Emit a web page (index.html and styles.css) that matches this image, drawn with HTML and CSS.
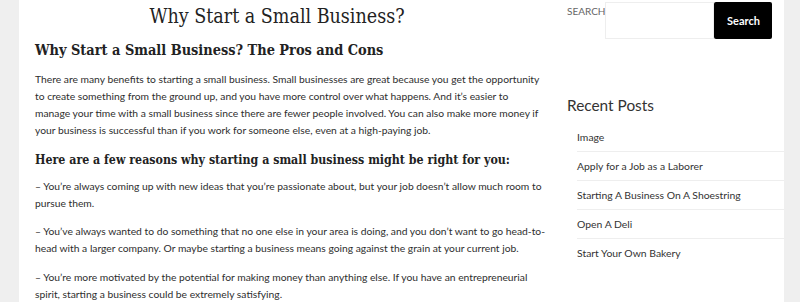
FILE: index.html
```html
<!DOCTYPE html>
<html lang="en">
<head>
    <meta charset="UTF-8">
    <meta name="viewport" content="width=device-width, initial-scale=1.0">
    <title>Why Start a Small Business?</title>
    <link rel="stylesheet" href="styles.css">
</head>
<body>

    <div class="page">
        <main class="content">
            <h1 class="entry-title">Why Start a Small Business?</h1>

            <h2>Why Start a Small Business? The Pros and Cons</h2>
            <p>There are many benefits to starting a small business. Small businesses are great because you get the opportunity to create something from the ground up, and you have more control over what happens. And it&#8217;s easier to manage your time with a small business since there are fewer people involved. You can also make more money if your business is successful than if you work for someone else, even at a high-paying job.</p>

            <h3>Here are a few reasons why starting a small business might be right for you:</h3>
            <p>&#8211; You&#8217;re always coming up with new ideas that you&#8217;re passionate about, but your job doesn&#8217;t allow much room to pursue them.</p>
            <p>&#8211; You&#8217;ve always wanted to do something that no one else in your area is doing, and you don&#8217;t want to go head-to-head with a larger company. Or maybe starting a business means going against the grain at your current job.</p>
            <p class="gap">&#8211; You&#8217;re more motivated by the potential for making money than anything else. If you have an entrepreneurial spirit, starting a business could be extremely satisfying.</p>
        </main>

        <aside class="sidebar">
            <form class="search-form">
                <label for="s">Search</label>
                <input type="search" id="s">
                <button type="button">Search</button>
            </form>

            <div class="widget">
                <h2 class="widget-title">Recent Posts</h2>
                <ul class="recent-posts">
                    <li><a href="#">Image</a></li>
                    <li><a href="#">Apply for a Job as a Laborer</a></li>
                    <li><a href="#">Starting A Business On A Shoestring</a></li>
                    <li><a href="#">Open A Deli</a></li>
                    <li><a href="#">Start Your Own Bakery</a></li>
                </ul>
            </div>
        </aside>
    </div>

</body>
</html>
```

FILE: styles.css
```css
body {
    margin: 0;
    background-color: #efefef;
    font-family: 'Lato', sans-serif;
    color: #333;
}

.page {
    display: flex;
    width: 765px;
    height: 302px;
    margin-left: 19px;
    background-color: #fff;
    overflow: hidden;
}

.content {
    width: 510px;
    padding-left: 16px;
    flex-shrink: 0;
}

.entry-title,
.content h2,
.content h3 {
    font-family: 'DejaVu Serif Condensed', 'DejaVu Serif', serif;
    color: #222;
}

.entry-title {
    margin: 3px 0 0;
    padding-right: 26px;
    text-align: center;
    font-weight: normal;
    font-size: 19.5px;
    line-height: 28px;
}

.content h2 {
    margin: 8px 0 10px;
    font-size: 14.4px;
    line-height: 22px;
    font-weight: bold;
}

.content h3 {
    margin: 11px 0 8px;
    font-size: 12.3px;
    line-height: 20px;
    font-weight: bold;
}

.content p {
    margin: 0 0 11px;
    font-size: 10.3px;
    line-height: 17px;
    color: #2e2e2e;
}

.content p.gap {
    margin-top: 12px;
}

.sidebar {
    margin-left: 22px;
    width: 217px;
}

.search-form {
    display: flex;
    margin-top: 2px;
}

.search-form label {
    font-size: 10px;
    text-transform: uppercase;
    color: #666;
    line-height: 14px;
    margin-top: 2px;
}

.search-form input {
    width: 109px;
    height: 37px;
    box-sizing: border-box;
    margin: 0;
    border: 1px solid #eee;
    border-radius: 0;
}

.search-form button {
    width: 58px;
    height: 37px;
    margin: 0;
    border: none;
    border-radius: 2px;
    background-color: #000;
    color: #fff;
    font-family: 'Lato', sans-serif;
    font-weight: bold;
    font-size: 11px;
}

.widget {
    margin-top: 56px;
}

.widget-title {
    margin: 0 0 8px;
    font-family: 'Lato', sans-serif;
    font-weight: normal;
    font-size: 15.4px;
    line-height: 20px;
    color: #333;
}

.recent-posts {
    list-style: none;
    margin: 0;
    padding: 0 0 0 10px;
}

.recent-posts li {
    height: 28px;
    line-height: 28px;
    border-bottom: 1px solid #eee;
    font-size: 10.4px;
}

.recent-posts li:last-child {
    border-bottom: none;
}

.recent-posts a {
    color: #333;
    text-decoration: none;
}
```
